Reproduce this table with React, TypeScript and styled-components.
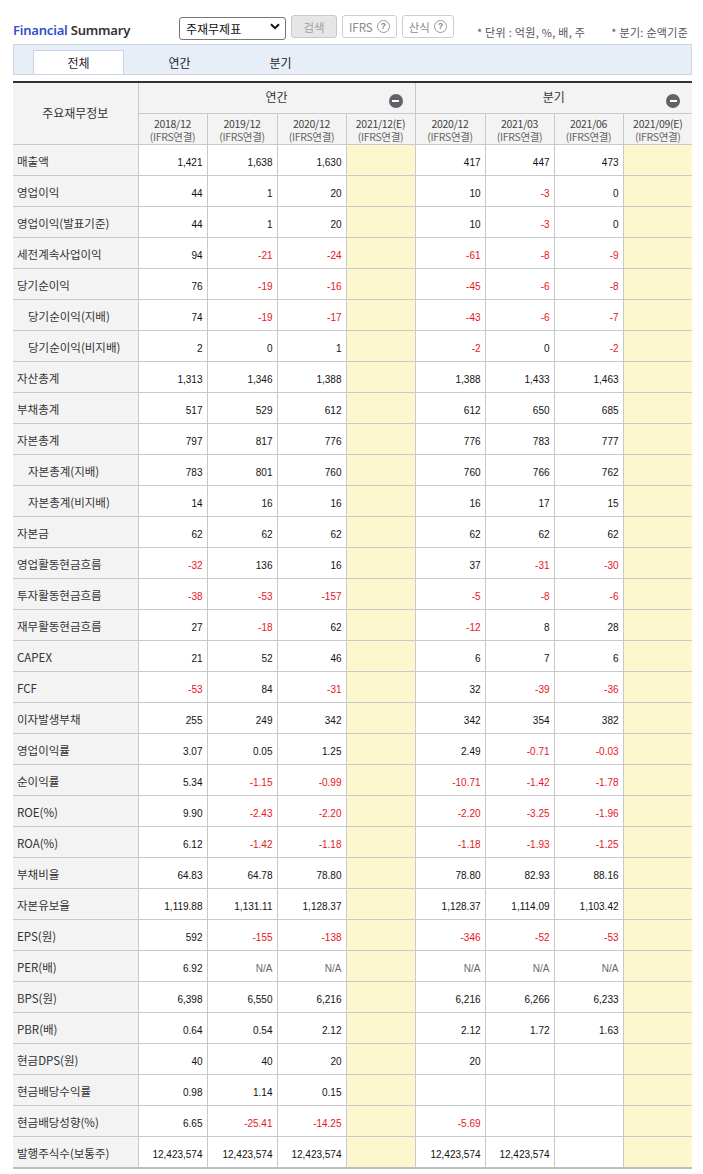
import React from "react";
import styled, { createGlobalStyle } from "styled-components";

const GlobalStyle = createGlobalStyle`
  html, body { margin: 0; padding: 0; background: #fff; }
  body { font-family: "Noto Sans CJK KR", "Noto Sans", sans-serif; color: #333; }
`;

const Page = styled.div`
  width: 679px;
  padding: 15px 11px 6px 13px;
`;

const TopBar = styled.div`
  display: flex;
  align-items: flex-end;
  height: 23px;
`;

const Title = styled.h2`
  margin: 0;
  width: 166px;
  flex-shrink: 0;
  font-family: "Noto Sans", "Noto Sans CJK KR", sans-serif;
  font-size: 13px;
  font-weight: 600;
  color: #333;
  line-height: 16px;
  letter-spacing: -0.2px;
  span { color: #2f4fd0; }
`;

const SelectWrap = styled.div`
  position: relative;
  width: 107px;
  height: 23px;
  flex-shrink: 0;
`;

const Select = styled.select`
  appearance: none;
  width: 100%;
  height: 100%;
  box-sizing: border-box;
  border: 1px solid #767676;
  border-radius: 3px;
  background: #fff;
  font-family: "Noto Sans CJK KR", sans-serif;
  font-size: 12px;
  color: #111;
  padding: 0 0 0 6px;
`;

const Chevron = styled.svg`
  position: absolute;
  right: 6px;
  top: 8px;
  pointer-events: none;
`;

const Btn = styled.button<{ $disabled?: boolean }>`
  margin-left: 5px;
  height: 23px;
  flex-shrink: 0;
  white-space: nowrap;
  box-sizing: border-box;
  border: 1px solid ${(p) => (p.$disabled ? "#c8c8c8" : "#cfcfcf")};
  border-radius: 3px;
  background: ${(p) => (p.$disabled ? "#e6e6e6" : "#fff")};
  color: ${(p) => (p.$disabled ? "#a0a0a0" : "#8a8a8a")};
  font-family: "Noto Sans CJK KR", sans-serif;
  font-size: 11.5px;
  padding: 0 6px;
  display: inline-flex;
  align-items: center;
  justify-content: center;
  gap: 4px;
`;

const SearchBtn = styled(Btn)`
  width: 46px;
`;

const HelpIcon = styled.span`
  width: 13px;
  height: 13px;
  box-sizing: border-box;
  border: 1px solid #999;
  border-radius: 50%;
  font-family: "Liberation Sans", sans-serif;
  font-size: 9px;
  font-weight: bold;
  color: #888;
  display: inline-flex;
  align-items: center;
  justify-content: center;
  line-height: 1;
`;

const Note = styled.span<{ $ml: number }>`
  margin-left: ${(p) => p.$ml}px;
  flex-shrink: 0;
  font-family: "Noto Sans CJK KR", sans-serif;
  font-size: 11px;
  color: #555;
  white-space: nowrap;
  line-height: 14px;
  letter-spacing: 0.3px;
  margin-bottom: -1px;
`;

const TabBar = styled.div`
  margin-top: 6px;
  height: 30px;
  box-sizing: border-box;
  background: #e8eef8;
  border: 1px solid #ccd5e4;
  border-bottom: none;
  display: flex;
  align-items: flex-end;
  padding-left: 19px;
  gap: 10px;
`;

const Tab = styled.div<{ $active?: boolean }>`
  width: 91px;
  height: 24px;
  box-sizing: border-box;
  display: flex;
  align-items: center;
  justify-content: center;
  font-size: 12px;
  color: #222;
  background: ${(p) => (p.$active ? "#fff" : "transparent")};
  border: 1px solid ${(p) => (p.$active ? "#cbd4e4" : "transparent")};
  border-bottom: none;
`;

const TabRule = styled.div`
  height: 1px;
  background: #ccd5e4;
`;

const Table = styled.table`
  margin-top: 6px;
  width: 679px;
  table-layout: fixed;
  border-collapse: collapse;
  border-top: 2px solid #333;
  border-bottom: 2px solid #bdbdbd;
`;

const HeadCell = styled.th`
  position: relative;
  background: #f3f3f3;
  border: 1px solid #c9c9c9;
  font-weight: normal;
  font-size: 12px;
  color: #333;
  height: 30px;
  padding: 0;
  &:first-child { border-left: none; }
  &:last-child { border-right: none; }
`;

const GroupLabel = styled.span`
  display: block;
  margin-top: -3px;
`;

const PeriodCell = styled.th`
  background: #f3f3f3;
  border: 1px solid #c9c9c9;
  font-weight: normal;
  height: 29px;
  padding: 1px 0 0;
  &:last-child { border-right: none; }
`;

const Period = styled.span`
  display: block;
  font-size: 10.5px;
  line-height: 13px;
  color: #444;
  letter-spacing: -0.3px;
`;

const Sub = styled.span`
  display: block;
  font-size: 10.5px;
  line-height: 13px;
  color: #666;
  letter-spacing: -0.3px;
`;

const Collapse = styled.span`
  position: absolute;
  right: 12px;
  top: 11px;
  width: 14px;
  height: 14px;
  border-radius: 50%;
  background: #606268;
  display: flex;
  align-items: center;
  justify-content: center;
  &::after {
    content: "";
    width: 7px;
    height: 2px;
    background: #fff;
  }
`;

const Label = styled.th<{ $indent?: boolean }>`
  background: #f3f3f3;
  border: 1px solid #c9c9c9;
  border-left: none;
  text-align: left;
  font-weight: normal;
  font-size: 11.5px;
  color: #333;
  height: 28px;
  padding: 2px 0 0 ${(p) => (p.$indent ? 15 : 4)}px;
  white-space: nowrap;
`;

const Cell = styled.td<{ $tone: "pos" | "neg" | "na"; $est?: boolean }>`
  background: ${(p) => (p.$est ? "#fdf7d0" : "#fff")};
  border: 1px solid #c9c9c9;
  text-align: right;
  padding: 4px 4px 0 0;
  height: 26px;
  font-family: "Liberation Sans", "Noto Sans", sans-serif;
  font-size: 10px;
  color: ${(p) => (p.$tone === "neg" ? "#e8141e" : p.$tone === "na" ? "#666" : "#111")};
  white-space: nowrap;
  &:last-child { border-right: none; }
`;

const widths = [125, 69, 70, 69, 69, 70, 69, 69, 69];

const periods: [string, boolean][] = [
  ["2018/12", false],
  ["2019/12", false],
  ["2020/12", false],
  ["2021/12(E)", true],
  ["2020/12", false],
  ["2021/03", false],
  ["2021/06", false],
  ["2021/09(E)", true],
];

type Row = [string, boolean, string[]];

const rows: Row[] = [
  ["매출액", false, ["1,421", "1,638", "1,630", "", "417", "447", "473", ""]],
  ["영업이익", false, ["44", "1", "20", "", "10", "-3", "0", ""]],
  ["영업이익(발표기준)", false, ["44", "1", "20", "", "10", "-3", "0", ""]],
  ["세전계속사업이익", false, ["94", "-21", "-24", "", "-61", "-8", "-9", ""]],
  ["당기순이익", false, ["76", "-19", "-16", "", "-45", "-6", "-8", ""]],
  ["당기순이익(지배)", true, ["74", "-19", "-17", "", "-43", "-6", "-7", ""]],
  ["당기순이익(비지배)", true, ["2", "0", "1", "", "-2", "0", "-2", ""]],
  ["자산총계", false, ["1,313", "1,346", "1,388", "", "1,388", "1,433", "1,463", ""]],
  ["부채총계", false, ["517", "529", "612", "", "612", "650", "685", ""]],
  ["자본총계", false, ["797", "817", "776", "", "776", "783", "777", ""]],
  ["자본총계(지배)", true, ["783", "801", "760", "", "760", "766", "762", ""]],
  ["자본총계(비지배)", true, ["14", "16", "16", "", "16", "17", "15", ""]],
  ["자본금", false, ["62", "62", "62", "", "62", "62", "62", ""]],
  ["영업활동현금흐름", false, ["-32", "136", "16", "", "37", "-31", "-30", ""]],
  ["투자활동현금흐름", false, ["-38", "-53", "-157", "", "-5", "-8", "-6", ""]],
  ["재무활동현금흐름", false, ["27", "-18", "62", "", "-12", "8", "28", ""]],
  ["CAPEX", false, ["21", "52", "46", "", "6", "7", "6", ""]],
  ["FCF", false, ["-53", "84", "-31", "", "32", "-39", "-36", ""]],
  ["이자발생부채", false, ["255", "249", "342", "", "342", "354", "382", ""]],
  ["영업이익률", false, ["3.07", "0.05", "1.25", "", "2.49", "-0.71", "-0.03", ""]],
  ["순이익률", false, ["5.34", "-1.15", "-0.99", "", "-10.71", "-1.42", "-1.78", ""]],
  ["ROE(%)", false, ["9.90", "-2.43", "-2.20", "", "-2.20", "-3.25", "-1.96", ""]],
  ["ROA(%)", false, ["6.12", "-1.42", "-1.18", "", "-1.18", "-1.93", "-1.25", ""]],
  ["부채비율", false, ["64.83", "64.78", "78.80", "", "78.80", "82.93", "88.16", ""]],
  ["자본유보율", false, ["1,119.88", "1,131.11", "1,128.37", "", "1,128.37", "1,114.09", "1,103.42", ""]],
  ["EPS(원)", false, ["592", "-155", "-138", "", "-346", "-52", "-53", ""]],
  ["PER(배)", false, ["6.92", "N/A", "N/A", "", "N/A", "N/A", "N/A", ""]],
  ["BPS(원)", false, ["6,398", "6,550", "6,216", "", "6,216", "6,266", "6,233", ""]],
  ["PBR(배)", false, ["0.64", "0.54", "2.12", "", "2.12", "1.72", "1.63", ""]],
  ["현금DPS(원)", false, ["40", "40", "20", "", "20", "", "", ""]],
  ["현금배당수익률", false, ["0.98", "1.14", "0.15", "", "", "", "", ""]],
  ["현금배당성향(%)", false, ["6.65", "-25.41", "-14.25", "", "-5.69", "", "", ""]],
  ["발행주식수(보통주)", false, ["12,423,574", "12,423,574", "12,423,574", "", "12,423,574", "12,423,574", "", ""]],
];

const tone = (v: string): "pos" | "neg" | "na" =>
  v.startsWith("-") ? "neg" : v === "N/A" ? "na" : "pos";

export default function App() {
  return (
    <>
      <GlobalStyle />
      <Page>
        <TopBar>
          <Title>
            <span>Financial</span> Summary
          </Title>
          <SelectWrap>
            <Select defaultValue="main">
              <option value="main">주재무제표</option>
            </Select>
            <Chevron width="10" height="7" viewBox="0 0 10 7">
              <path d="M1 1.2 L5 5.2 L9 1.2" fill="none" stroke="#111" strokeWidth="2" />
            </Chevron>
          </SelectWrap>
          <SearchBtn $disabled>검색</SearchBtn>
          <Btn>
            IFRS <HelpIcon>?</HelpIcon>
          </Btn>
          <Btn>
            산식 <HelpIcon>?</HelpIcon>
          </Btn>
          <Note $ml={23}>* 단위 : 억원, %, 배, 주</Note>
          <Note $ml={26}>* 분기: 순액기준</Note>
        </TopBar>
        <TabBar>
          <Tab $active>전체</Tab>
          <Tab>연간</Tab>
          <Tab>분기</Tab>
        </TabBar>
        <TabRule />
        <Table>
          <colgroup>
            {widths.map((w, i) => (
              <col key={i} style={{ width: w }} />
            ))}
          </colgroup>
          <thead>
            <tr>
              <HeadCell rowSpan={2}>
                <GroupLabel>주요재무정보</GroupLabel>
              </HeadCell>
              <HeadCell colSpan={4}>
                <GroupLabel>연간</GroupLabel>
                <Collapse />
              </HeadCell>
              <HeadCell colSpan={4}>
                <GroupLabel>분기</GroupLabel>
                <Collapse />
              </HeadCell>
            </tr>
            <tr>
              {periods.map(([p], i) => (
                <PeriodCell key={i}>
                  <Period>{p}</Period>
                  <Sub>(IFRS연결)</Sub>
                </PeriodCell>
              ))}
            </tr>
          </thead>
          <tbody>
            {rows.map(([label, indent, vals]) => (
              <tr key={label}>
                <Label $indent={indent}>{label}</Label>
                {vals.map((v, i) => (
                  <Cell key={i} $tone={tone(v)} $est={periods[i][1]}>
                    {v}
                  </Cell>
                ))}
              </tr>
            ))}
          </tbody>
        </Table>
      </Page>
    </>
  );
}
